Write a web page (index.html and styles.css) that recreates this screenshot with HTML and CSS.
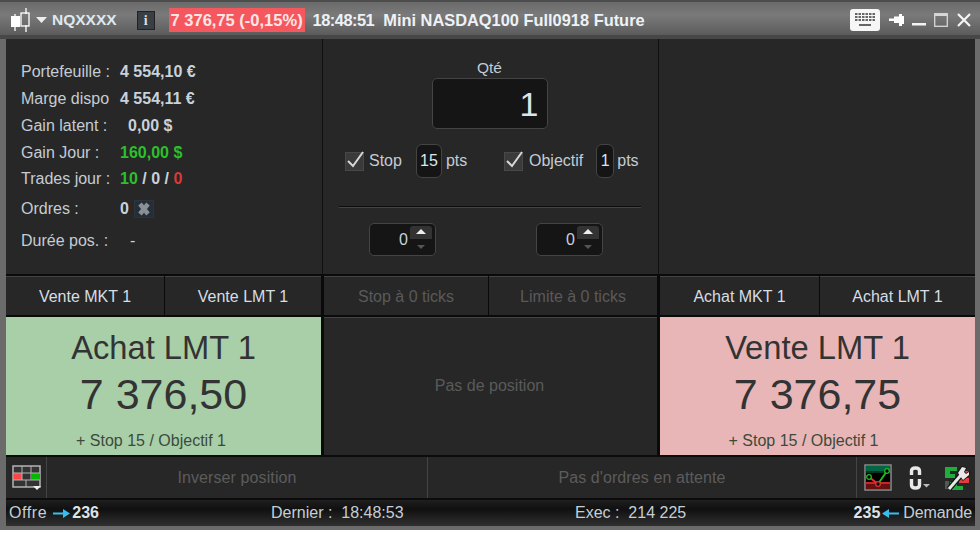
FILE: index.html
```html
<!DOCTYPE html>
<html lang="fr">
<head>
<meta charset="utf-8">
<title>NQXXXX</title>
<link rel="stylesheet" href="styles.css">
</head>
<body>
<div class="window">
  <header class="titlebar">
    <svg class="ico-candles" width="24" height="26" viewBox="0 0 24 26"><path d="M9 7v4M9 20v4M20 1v6M20 18v7" stroke="#fff" stroke-width="1.300" fill="none"/><rect x="5" y="9" width="9" height="11" fill="#fff"/><rect x="15" y="6" width="8" height="13" fill="none" stroke="#fff" stroke-width="1.300"/></svg>
    <svg class="ico-caret" width="11" height="6" viewBox="0 0 11 6"><path d="M0 0h11L5.500 6z" fill="#eee"/></svg>
    <span class="symbol">NQXXXX</span>
    <span class="info">i</span>
    <span class="price">7 376,75 (-0,15%)</span>
    <span class="title-text"><span class="time">18:48:51</span><span class="name">Mini NASDAQ100 Full0918 Future</span></span>
    <span class="title-spacer"></span>
    <svg class="ico-kbd" width="30" height="22" viewBox="0 0 30 22"><rect width="30" height="22" rx="3" fill="#f6f6f6"/><path d="M5 5h20M5 8h20M5 11h20" stroke="#666" stroke-width="2" stroke-dasharray="2.500 1"/><rect x="9" y="15" width="12" height="2" fill="#666"/></svg>
    <svg class="ico-pin" width="15" height="12" viewBox="0 0 15 12"><path d="M0 4.500h5V2.500h5V0h3v2h2v8h-2v2h-3V9H5V7H0z" fill="#fff"/></svg>
    <svg class="ico-min" width="14" height="12" viewBox="0 0 14 12"><rect y="9" width="14" height="2.500" fill="#f4f4f4"/></svg>
    <svg class="ico-max" width="14" height="14" viewBox="0 0 14 14"><rect x=".7" y=".7" width="12.600" height="12.600" fill="none" stroke="#d8d8d8" stroke-width="1.300"/><rect x="1" y="1" width="12" height="2" fill="#d8d8d8"/></svg>
    <svg class="ico-close" width="14" height="14" viewBox="0 0 14 14"><path d="M1 1l12 12M13 1L1 13" stroke="#f4f4f4" stroke-width="2.200"/></svg>
  </header>

  <section class="top">
    <div class="stats">
      <div class="stat"><span class="k">Portefeuille :</span><b>4 554,10 €</b></div>
      <div class="stat"><span class="k">Marge dispo</span><b>4 554,11 €</b></div>
      <div class="stat"><span class="k">Gain latent :</span><b class="in">0,00 $</b></div>
      <div class="stat"><span class="k">Gain Jour :</span><b class="green">160,00 $</b></div>
      <div class="stat"><span class="k">Trades jour :</span><b><span class="green">10</span> / 0 / <span class="red">0</span></b></div>
      <div class="stat orders"><span class="k">Ordres :</span><b>0</b><svg class="ico-x" width="20" height="18" viewBox="0 0 20 18"><rect x=".5" y=".5" width="19" height="17" fill="#252d36" stroke="#2c343c"/><path d="M6 4l8 10M14 4L6 14" stroke="#8a9097" stroke-width="4.500"/></svg></div>
      <div class="stat duration"><span class="k">Durée pos. :</span><b class="dash">-</b></div>
    </div>
    <div class="ticket">
      <div class="qty-label">Qté</div>
      <div class="qty">1</div>
      <div class="opts">
        <div class="opt opt-stop">
          <span class="check"><svg width="22" height="21" viewBox="0 0 22 21"><path d="M3 12l5 5L18 3" fill="none" stroke="#d8d8d8" stroke-width="2"/></svg></span>
          <span>Stop</span><span class="num w-15">15</span><span>pts</span>
        </div>
        <div class="opt opt-obj">
          <span class="check"><svg width="22" height="21" viewBox="0 0 22 21"><path d="M3 12l5 5L18 3" fill="none" stroke="#d8d8d8" stroke-width="2"/></svg></span>
          <span>Objectif</span><span class="num w-1">1</span><span>pts</span>
        </div>
      </div>
      <div class="rule"></div>
      <div class="spins">
        <div class="spin"><span class="val">0</span><span class="arrows"><i class="up"></i><i class="down"></i></span></div>
        <div class="spin"><span class="val">0</span><span class="arrows"><i class="up"></i><i class="down"></i></span></div>
      </div>
    </div>
    <div class="blank"></div>
  </section>

  <section class="buttons">
    <div class="btn-group"><div class="btn">Vente MKT 1</div><div class="btn">Vente LMT 1</div></div>
    <div class="btn-group mid"><div class="btn dim">Stop à 0 ticks</div><div class="btn dim">Limite à 0 ticks</div></div>
    <div class="btn-group"><div class="btn">Achat MKT 1</div><div class="btn">Achat LMT 1</div></div>
  </section>

  <section class="big">
    <div class="card buy"><div class="c-title">Achat LMT 1</div><div class="c-price">7 376,50</div><div class="c-sub">+ Stop 15 / Objectif 1</div></div>
    <div class="no-pos">Pas de position</div>
    <div class="card sell"><div class="c-title">Vente LMT 1</div><div class="c-price">7 376,75</div><div class="c-sub">+ Stop 15 / Objectif 1</div></div>
  </section>

  <section class="toolbar">
    <div class="tool tool-left">
      <svg width="30" height="26" viewBox="0 0 30 26"><rect x="1" y="1" width="27" height="21" fill="#333" stroke="#b4b4b4" stroke-width="1.500"/><rect x="2" y="8" width="8" height="7" fill="#f44"/><rect x="20" y="8" width="8" height="7" fill="#0b0"/><path d="M1 8h27M1 15h27M10 1v14M19 1v14M14 15v7" stroke="#b4b4b4"/><path d="M21 21h8l-4 4z" fill="#eee"/></svg>
    </div>
    <div class="tool t-inv">Inverser position</div>
    <div class="tool t-ord">Pas d'ordres en attente</div>
    <div class="tool tool-right">
      <svg class="i-chart" width="28" height="27" viewBox="0 0 28 27"><rect x="1" y="1" width="26" height="25" fill="#000" stroke="#8c8c8c" stroke-width="1.500"/><rect x="2" y="2" width="24" height="5" fill="#064"/><rect x="2" y="7" width="24" height="2" fill="#032"/><rect x="2" y="18" width="24" height="2" fill="#c22"/><rect x="2" y="20" width="24" height="5" fill="#611"/><path d="M5 13l9 7" stroke="#d33" stroke-width="2"/><path d="M14 20l9-13" stroke="#2b2" stroke-width="2"/><circle cx="5" cy="13" r="2.300" fill="#000" stroke="#2b2" stroke-width="1.300"/><circle cx="14" cy="20" r="2.300" fill="#000" stroke="#d33" stroke-width="1.300"/><circle cx="23" cy="7" r="2.300" fill="#000" stroke="#2b2" stroke-width="1.300"/></svg>
      <svg class="i-link" width="22" height="26" viewBox="0 0 22 26"><path d="M2.500 10V6q0-3 4-3t4 3v4M2.500 14v6q0 3 4 3t4-3v-6" fill="none" stroke="#e8e8e8" stroke-width="3.400"/><path d="M14 19h7l-3.500 3.500z" fill="#bbb"/></svg>
      <svg class="i-tool" width="26" height="26" viewBox="0 0 26 26"><path d="M1 2h12v4H6v3h5v4H1z" fill="#1fae3c"/><path d="M15 6h10v4h-4v3h4v5H15" fill="#e23c3c"/><path d="M6 17h7v4h6v4H6z" fill="#1fae3c"/><path d="M1 16h4v8H1z" fill="#555"/><path d="M5 24L17 10" stroke="#111" stroke-width="5.500"/><path d="M14 8l4-6 4 1-2 4 2 2 3-2v3l-6 5z" fill="#111" stroke="#111" stroke-width="1.500"/><path d="M5 24L17 10" stroke="#e8e8e8" stroke-width="3"/><path d="M14 8l4-6 4 1-2 4 2 2 3-2v3l-6 5z" fill="#e8e8e8"/></svg>
    </div>
  </section>

  <footer class="status">
    <div class="st-left"><span class="offre">Offre</span><svg width="17" height="9" viewBox="0 0 17 9"><path d="M0 3.500h10V0l7 4.500L10 9V5.500H0z" fill="#38bdf0"/></svg><b>236</b></div>
    <div class="st-mid1">Dernier :&nbsp; 18:48:53</div>
    <div class="st-mid2">Exec :&nbsp; 214 225</div>
    <div class="st-right"><b>235</b><svg width="17" height="9" viewBox="0 0 17 9"><path d="M17 3.500H7V0L0 4.500 7 9V5.500h10z" fill="#38bdf0"/></svg><span class="demande">Demande</span></div>
  </footer>
</div>
</body>
</html>
```

FILE: styles.css
```css
* { box-sizing: border-box; }
html, body { margin: 0; padding: 0; background: #fff; }
body { width: 980px; height: 533px; overflow: hidden; font-family: "Liberation Sans", Arial, sans-serif; font-size: 16px; color: #c4ccd4; }
svg { display: block; flex: none; }

.window { width: 980px; height: 530px; background: #6b6b6b; border-top: 2px solid #4c4c4c; padding: 0 5px 5px 6px; display: flex; flex-direction: column; }

.titlebar { height: 37px; margin: 0 -5px 0 -6px; padding: 0 5px 1px 6px; flex: none; display: flex; align-items: center; background: linear-gradient(#6a6a6a, #7a7a7a 35%, #5c5c5c 88%, #474747 90%); color: #eef; font-weight: bold; font-size: 16px; }
.ico-caret { margin: 0 0 0 6px; }
.symbol { margin-left: 5px; color: #dfe8f0; font-size: 15.500px; }
.info { width: 18px; height: 19px; margin-left: 20px; background: #3a3f46; border: 1px solid #222; color: #ddd; font: bold 14px "Liberation Serif", serif; text-align: center; line-height: 17px; }
.price { margin-left: 14px; height: 24px; width: 136px; background: #f4585e; color: #ffe6e6; line-height: 24px; text-align: center; font-weight: bold; font-size: 16.500px; white-space: nowrap; }
.title-text { margin-left: 8px; color: #eef2f6; white-space: nowrap; font-size: 16.400px; }
.time { letter-spacing: -.5px; }
.name { margin-left: 9px; }
.title-spacer { flex: 1; }
.ico-kbd { margin-right: 9px; }
.ico-pin { margin-right: 8px; }
.ico-min { margin-right: 8px; }
.ico-max { margin-right: 9px; }
.ico-close { margin-right: 4px; }

.top { height: 235px; flex: none; display: grid; grid-template-columns: 317px 336px 316px; background: #272727; }
.stats { padding: 20px 0 0 15px; border-right: 1px solid #0f0f0f; }
.stat { height: 26.750px; display: flex; align-items: center; white-space: nowrap; }
.stat .k { width: 99px; }
.stat b { color: #c8d2dc; font-weight: bold; }
.stat b.in { margin-left: 8px; }
.stat b.dash { margin-left: 10px; font-weight: normal; }
.stat b.green { color: #2cc02c; }
.stat.orders { height: 33px; }
.stat.duration { height: 31px; }
.ico-x { margin-left: 5px; }
.green { color: #2cc02c; }
.red { color: #d83a3a; }

.ticket { display: flex; flex-direction: column; align-items: center; padding: 19px 2px 0 0; border-right: 1px solid #0f0f0f; }
.qty-label { height: 20px; line-height: 20px; font-size: 15.500px; }
.qty { width: 116px; height: 51px; background: #151515; border: 1.500px solid #444; border-radius: 5px; text-align: right; font-size: 34px; line-height: 50px; padding-right: 8px; color: #dde4ea; }
.opts { display: flex; margin-top: 15px; width: 100%; height: 34px; padding-left: 22px; }
.opt { display: flex; align-items: center; }
.opt-stop { width: 159px; }
.opt-stop .check { margin-right: 5px; }
.check { width: 19px; height: 19px; margin-right: 6px; background: #3a3a3a; border: 1px solid #484848; display: block; }
.check svg { margin: -4px 0 0 -1px; }
.num { height: 34px; margin: 0 4px 0 14px; background: #151515; border: 1.500px solid #444; border-radius: 6px; text-align: center; line-height: 31px; color: #dde4ea; }
.w-15 { width: 26px; }
.w-1 { width: 18px; margin-left: 13px; margin-right: 3px; }
.rule { width: 302px; height: 2px; margin-top: 28px; background: #0c0c0c; border-bottom: 1px solid #444; }
.spins { display: flex; margin-top: 15px; width: 100%; padding-left: 46px; gap: 100px; }
.spin { width: 67px; height: 33px; background: #151515; border: 1.500px solid #444; border-radius: 5px; display: flex; justify-content: flex-end; align-items: center; padding-right: 3px; }
.val { margin-right: 2px; color: #c8d2dc; }
.arrows { width: 22px; height: 27px; display: flex; flex-direction: column; align-items: center; }
.arrows i { display: block; width: 22px; height: 13px; position: relative; }
.arrows .up { background: #333; border-radius: 3px 3px 0 0; }
.arrows .up::after { content: ""; position: absolute; left: 6px; top: 3px; border: 5px solid transparent; border-top: 0; border-bottom: 5px solid #eee; }
.arrows .down::after { content: ""; position: absolute; left: 7px; top: 6px; border: 4px solid transparent; border-bottom: 0; border-top: 4px solid #555; }

.buttons { height: 43px; flex: none; display: grid; grid-template-columns: 315px 333px 315px; column-gap: 3px; background: #0a0a0a; padding-top: 2px; padding-bottom: 2px; }
.btn-group { display: flex; gap: 1px; }
.btn { flex: 1; background: #272727; display: flex; align-items: center; justify-content: center; color: #d6dde4; border-top: 1px solid #444; padding-top: 1px; white-space: nowrap; }
.btn.dim { color: #5a5a5a; }
.btn-group .btn:first-child { flex: none; width: 158px; }
.btn-group.mid .btn:first-child { width: 164px; }
.btn-group:last-child .btn:first-child { width: 159px; }

.big { height: 138px; flex: none; display: grid; grid-template-columns: 315px 333px 315px; column-gap: 3px; background: #0a0a0a; }
.card { text-align: center; color: #333; display: flex; flex-direction: column; align-items: center; padding-top: 12px; }
.buy { background: #a8cfa8; }
.sell { background: #e8b6b6; }
.c-title { font-size: 32.700px; line-height: 38px; }
.c-price { font-size: 43px; line-height: 52px; margin-top: 1px; }
.c-sub { font-size: 16px; line-height: 18px; margin-top: 12px; margin-right: 25px; color: #3c4a3c; white-space: nowrap; }
.sell .c-sub { margin-right: 28px; }
.no-pos { background: #272727; display: flex; align-items: center; justify-content: center; color: #5a5a5a; border-top: 1px solid #444; padding: 0 2px 2px 0; }

.toolbar { height: 45px; flex: none; display: flex; background: #272727; border-top: 2px solid #0c0c0c; border-bottom: 2px solid #0c0c0c; }
.tool { display: flex; align-items: center; justify-content: center; color: #5c5c5c; border-right: 1px solid #444; letter-spacing: .1px; }
.tool-left { width: 41px; padding-left: 4px; padding-right: 2px; }
.t-inv { width: 381px; }
.t-ord { width: 429px; }
.tool-right { flex: 1; border-right: 0; justify-content: flex-start; padding-left: 7px; }
.i-link { margin-left: 17px; }
.i-tool { margin-left: 13px; }

.status { height: 26px; flex: none; display: flex; align-items: center; background: linear-gradient(#1f1f1f, #101010 35%, #303030); color: #c5ced6; padding: 0 3px; }
.status b { color: #dde4ea; }
.st-left { width: 262px; display: flex; align-items: center; gap: 2px; }
.offre { letter-spacing: .6px; margin-right: 4px; }
.demande { margin-left: 2px; letter-spacing: -.1px; }
.st-mid1 { width: 304px; white-space: nowrap; }
.st-mid2 { flex: 1; white-space: nowrap; }
.st-right { display: flex; align-items: center; gap: 2px; }
```
